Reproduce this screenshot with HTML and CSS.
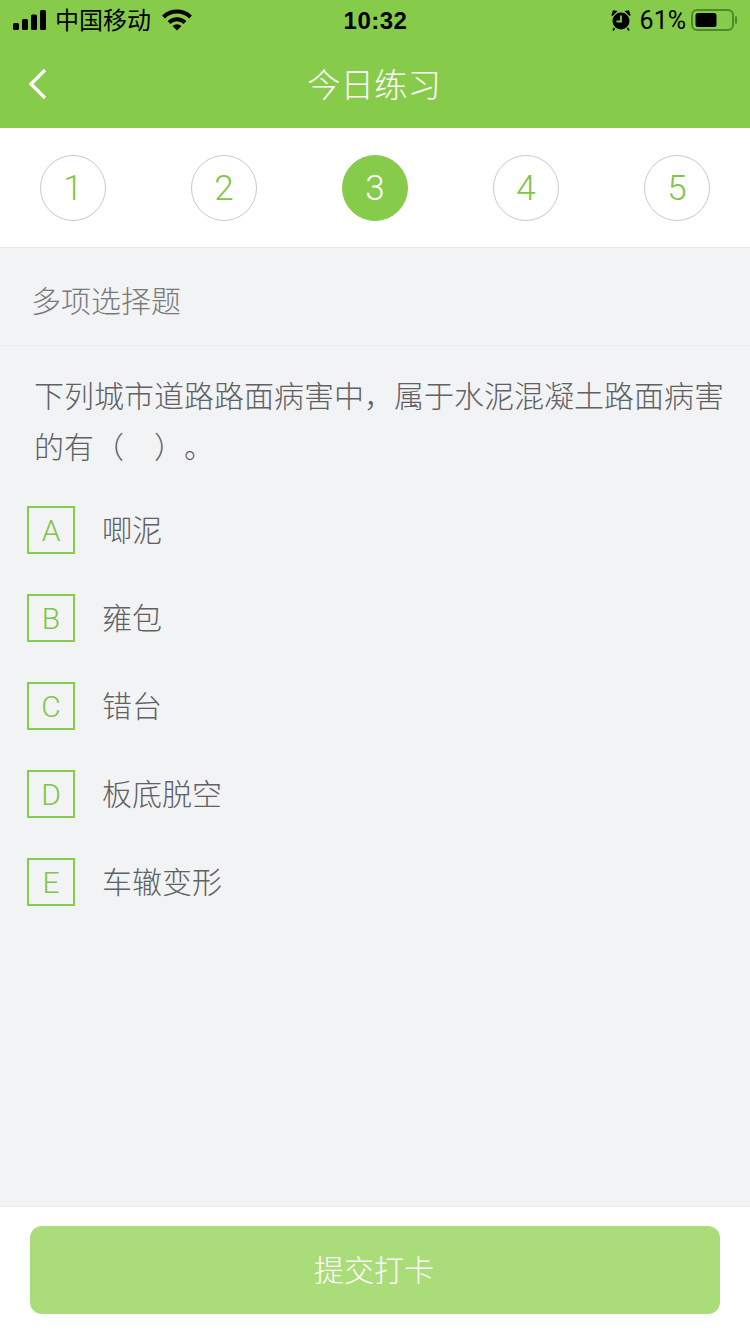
FILE: index.html
```html
<!DOCTYPE html>
<html lang="zh-CN">
<head>
  <meta charset="UTF-8">
  <meta name="viewport" content="width=device-width, initial-scale=1.0">
  <title>今日练习</title>
  <link rel="stylesheet" href="styles.css">
</head>
<body>
  <div class="page">
    <header class="top">
      <div class="statusBar">
        <div class="statusLeft">
          <svg class="signal" width="34" height="20" viewBox="0 0 34 20">
            <rect x="0" y="13" width="6" height="7" rx="1.500"/>
            <rect x="9" y="9" width="6" height="11" rx="1.500"/>
            <rect x="18" y="4.500" width="6" height="15.500" rx="1.500"/>
            <rect x="27" y="0" width="6" height="20" rx="1.500"/>
          </svg>
          <span class="carrier">中国移动</span>
          <svg class="wifi" width="30" height="22" viewBox="0 0 30 22">
            <path d="M1.500 8 A19.500 19.500 0 0 1 28.500 8" fill="none" stroke="#000" stroke-width="4"/>
            <path d="M7 13.500 A11.500 11.500 0 0 1 23 13.500" fill="none" stroke="#000" stroke-width="4"/>
            <path d="M10.500 17 A7 7 0 0 1 19.500 17 L15 21.500 Z"/>
          </svg>
        </div>
        <div class="statusTime">10:32</div>
        <div class="statusRight">
          <svg class="alarm" width="20" height="21" viewBox="0 0 20 21">
            <path d="M1 5.500 L5 1.500 L2.500 1 Z M19 5.500 L15 1.500 L17.500 1 Z" stroke="#000" stroke-width="1.500"/>
            <circle cx="10" cy="11" r="8.500"/>
            <path d="M10 5.500 V11.500 H5.500" fill="none" stroke="#86cc4a" stroke-width="1.800"/>
            <path d="M3.500 18 L2 20.500 M16.500 18 L18 20.500" stroke="#000" stroke-width="1.600"/>
          </svg>
          <span class="percent">61%</span>
          <svg class="battery" width="47" height="22" viewBox="0 0 47 22">
            <rect x="1" y="1" width="41" height="20" rx="5" fill="none" stroke="#4f8a2a" stroke-width="2"/>
            <rect x="4.500" y="4" width="21" height="14" rx="2.500"/>
            <path d="M45 8 V14" stroke="#4f8a2a" stroke-width="2" stroke-linecap="round"/>
          </svg>
        </div>
      </div>
      <div class="navBar">
        <svg class="backIcon" width="20" height="32" viewBox="0 0 20 32">
          <path d="M17 2 L3 16 L17 30" fill="none" stroke="#fff" stroke-width="3.400"/>
        </svg>
        <span class="navTitle">今日练习</span>
      </div>
    </header>

    <div class="steps">
      <div class="step">1</div>
      <div class="step">2</div>
      <div class="step active">3</div>
      <div class="step">4</div>
      <div class="step">5</div>
    </div>

    <main class="main">
      <div class="typeLabel">多项选择题</div>
      <p class="question">下列城市道路路面病害中，属于水泥混凝土路面病害的有（　）。</p>
      <div class="options">
        <div class="option"><span class="optKey">A</span><span class="optText">唧泥</span></div>
        <div class="option"><span class="optKey">B</span><span class="optText">雍包</span></div>
        <div class="option"><span class="optKey">C</span><span class="optText">错台</span></div>
        <div class="option"><span class="optKey">D</span><span class="optText">板底脱空</span></div>
        <div class="option"><span class="optKey">E</span><span class="optText">车辙变形</span></div>
      </div>
    </main>

    <footer class="footer">
      <button class="submitBtn" type="button">提交打卡</button>
    </footer>
  </div>
</body>
</html>
```

FILE: styles.css
```css
* {
  box-sizing: border-box;
}
body {
  margin: 0;
  font-family: "Liberation Sans", "Noto Sans CJK SC", sans-serif;
  background: #f2f3f5;
}
.page {
  width: 750px;
  height: 1334px;
  display: flex;
  flex-direction: column;
  overflow: hidden;
}
.top {
  background: #86cc4a;
}
.statusBar {
  height: 40px;
  padding: 0 12px 0 13px;
  display: grid;
  grid-template-columns: 1fr auto 1fr;
  align-items: center;
  color: #000;
}
.statusLeft {
  display: flex;
  align-items: center;
}
.carrier {
  margin-left: 8px;
  padding-bottom: 4px;
  font-size: 24px;
}
.wifi {
  margin-left: 11px;
}
.statusTime {
  padding-top: 2px;
  font-size: 24px;
  font-weight: bold;
  letter-spacing: 0.5px;
}
.statusRight {
  display: flex;
  align-items: center;
  justify-content: flex-end;
}
.percent {
  margin: 0 5px 0 9px;
  font-family: Roboto, sans-serif;
  font-size: 25px;
}
.navBar {
  height: 88px;
  padding: 0 2px 3px 0;
  display: flex;
  align-items: center;
  justify-content: center;
  position: relative;
}
.backIcon {
  position: absolute;
  left: 28px;
  top: 28px;
}
.navTitle {
  font-size: 33.500px;
  font-weight: 300;
  color: #fff;
}
.steps {
  height: 120px;
  padding: 27px 40px 0;
  display: flex;
  justify-content: space-between;
  align-items: flex-start;
  background: #fff;
  border-bottom: 1px solid #e8e9eb;
}
.step {
  width: 66px;
  height: 66px;
  display: flex;
  align-items: center;
  justify-content: center;
  border: 1px solid #c9c9c9;
  border-radius: 50%;
  font-family: Roboto, sans-serif;
  font-size: 35px;
  font-weight: 350;
  color: #80c545;
}
.step.active {
  background: #86cc4a;
  border-color: #86cc4a;
  color: #fff;
}
.main {
  flex: 1;
}
.typeLabel {
  height: 98px;
  padding: 33px 0 0 31px;
  font-size: 30px;
  font-weight: 300;
  line-height: 42px;
  color: #787a7c;
  border-bottom: 1px solid #ebecee;
}
.question {
  margin: 0;
  padding: 25px 20px 0 34px;
  font-size: 30px;
  font-weight: 300;
  line-height: 51px;
  color: #5f6163;
  text-spacing-trim: space-all;
}
.options {
  padding: 33px 0 0 27px;
  display: flex;
  flex-direction: column;
  gap: 40px;
}
.option {
  display: flex;
  align-items: center;
  height: 48px;
}
.optKey {
  width: 48px;
  height: 48px;
  display: flex;
  align-items: center;
  justify-content: center;
  border: 2px solid #86cc4a;
  font-family: Roboto, sans-serif;
  font-size: 30px;
  font-weight: 350;
  color: #80c545;
}
.optText {
  margin: -4px 0 0 27px;
  font-size: 30px;
  font-weight: 300;
  color: #5f6163;
}
.footer {
  height: 128px;
  padding: 19px 30px 0;
  background: #fff;
  border-top: 1px solid #e8e9eb;
}
.submitBtn {
  display: block;
  width: 690px;
  height: 88px;
  padding: 0 2px 4px 0;
  border: none;
  border-radius: 12px;
  background: #aadc7a;
  color: #fff;
  font-family: inherit;
  font-size: 30px;
  font-weight: 300;
}
```
